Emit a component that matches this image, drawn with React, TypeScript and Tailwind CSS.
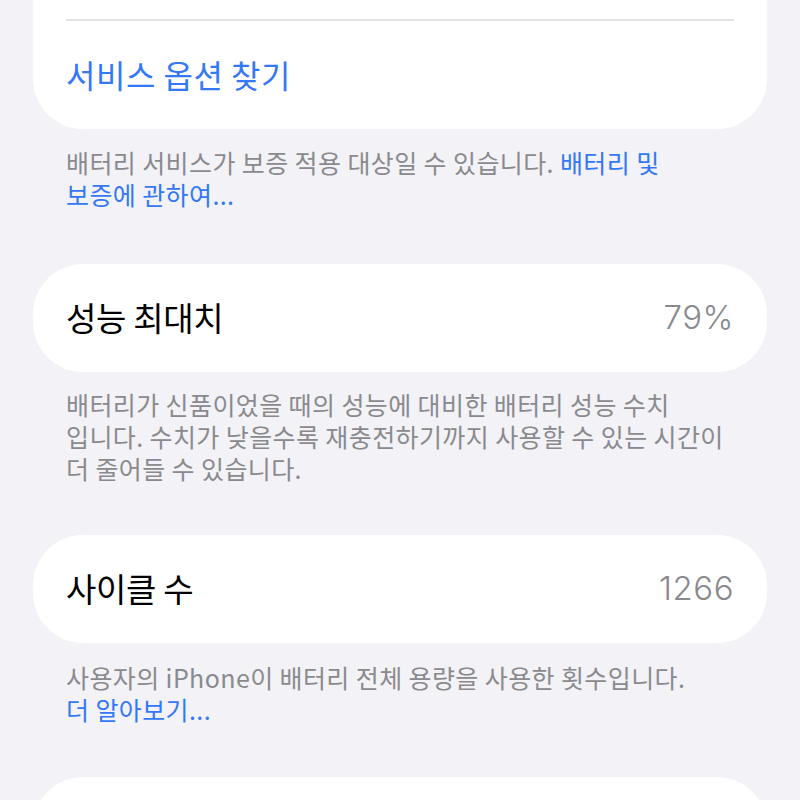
const font = { fontFamily: '"Noto Sans CJK KR", "Noto Sans", sans-serif' }
const digits = { fontFamily: 'Inter, "Noto Sans CJK KR", sans-serif' }

function Footer({ lines }: { lines: React.ReactNode[] }) {
  return (
    <div className="px-[66px] text-[25px] leading-[32px] text-[#8a8a8e] tracking-[0.4px]">
      {lines.map((l, i) => (
        <div key={i} className="whitespace-nowrap">
          {l}
        </div>
      ))}
    </div>
  )
}

function ValueRow({ label, value }: { label: string; value: string }) {
  return (
    <div className="mx-[33px] h-[108px] rounded-[50px] bg-white px-[33px] flex items-center justify-between">
      <span className="text-[33px] text-black tracking-[-0.3px]">{label}</span>
      <span className="text-[33px] text-[#8a8a8e] font-light tracking-[0.5px]" style={digits}>
        {value}
      </span>
    </div>
  )
}

export default function App() {
  return (
    <div className="w-[800px] h-[800px] overflow-hidden bg-[#f2f2f7]" style={font}>
      {/* top card, cut off above */}
      <div className="mx-[33px] bg-white rounded-b-[50px]">
        <div className="h-[19px]" />
        <div className="mx-[33px] h-[2px] bg-[#e3e3e8]" />
        <div className="h-[108px] px-[33px] flex items-center pb-[3px]">
          <span className="text-[32px] text-[#3478f6] tracking-[0.5px]">서비스 옵션 찾기</span>
        </div>
      </div>

      <div className="pt-[17px] pb-[54px]">
        <Footer
          lines={[
            <>
              배터리 서비스가 보증 적용 대상일 수 있습니다.{' '}
              <span className="text-[#3478f6]">배터리 및</span>
            </>,
            <span className="text-[#3478f6]">보증에 관하여...</span>,
          ]}
        />
      </div>

      <ValueRow label="성능 최대치" value="79%" />

      <div className="pt-[16px] pb-[51px]">
        <Footer
          lines={[
            '배터리가 신품이었을 때의 성능에 대비한 배터리 성능 수치',
            '입니다. 수치가 낮을수록 재충전하기까지 사용할 수 있는 시간이',
            '더 줄어들 수 있습니다.',
          ]}
        />
      </div>

      <ValueRow label="사이클 수" value="1266" />

      <div className="pt-[18px] pb-[52px]">
        <Footer
          lines={[
            '사용자의 iPhone이 배터리 전체 용량을 사용한 횟수입니다.',
            <span className="text-[#3478f6]">더 알아보기...</span>,
          ]}
        />
      </div>

      <div className="mx-[33px] h-[108px] rounded-[50px] bg-white" />
    </div>
  )
}
